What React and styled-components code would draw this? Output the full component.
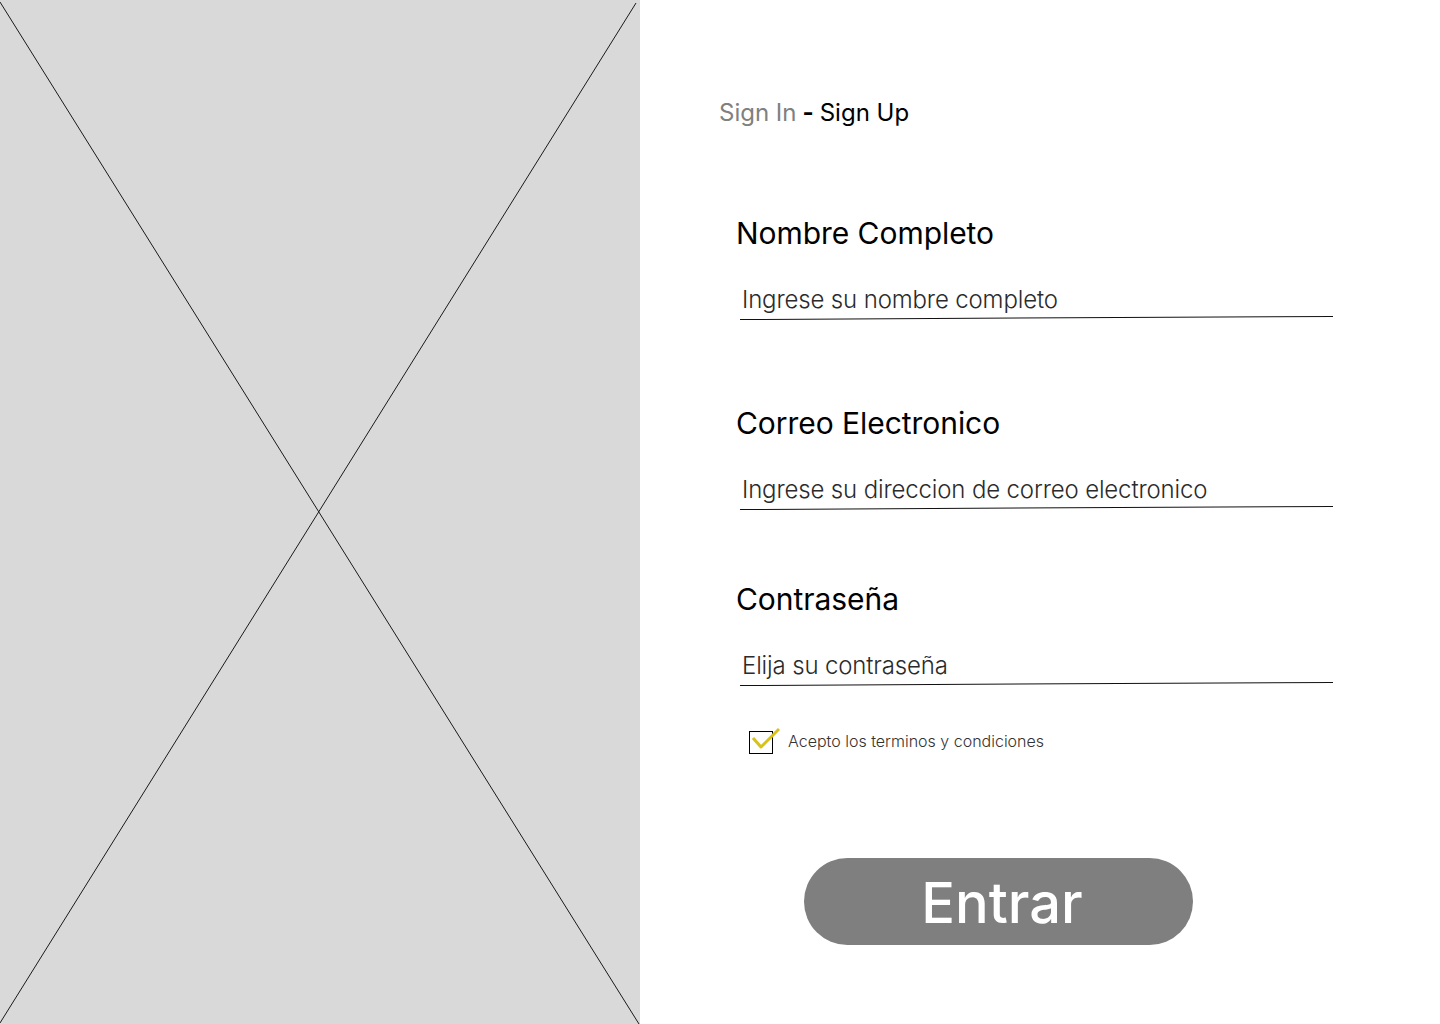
import React from 'react';
import styled, { createGlobalStyle } from 'styled-components';

const GlobalStyle = createGlobalStyle`
  html, body {
    margin: 0;
    padding: 0;
    background: #ffffff;
  }
  body {
    font-family: Inter, "Noto Sans", sans-serif;
  }
`;

const Page = styled.div`
  display: grid;
  grid-template-columns: 640px 1fr;
  width: 1440px;
  height: 1024px;
  overflow: hidden;
`;

const ImagePanel = styled.div`
  background: #d9d9d9;
  height: 1024px;
`;

const Placeholder = styled.svg`
  display: block;
  width: 640px;
  height: 1024px;
`;

const FormSide = styled.div`
  display: flex;
  flex-direction: column;
  padding-top: 98px;
`;

const Tabs = styled.div`
  margin-left: 79px;
  font-size: 24px;
  line-height: 30px;
  color: #000;
`;

const Tab = styled.span`
  color: ${props => (props.$active ? '#000000' : '#808080')};
`;

const Dash = styled.span`
  font-weight: 700;
  margin: 0 6px;
`;

const Fields = styled.div`
  display: flex;
  flex-direction: column;
  margin-left: 96px;
  width: 597px;
`;

const Field = styled.div`
  display: flex;
  flex-direction: column;
  margin-top: ${props => props.$top}px;
`;

const Label = styled.label`
  font-size: 30px;
  line-height: 34px;
  letter-spacing: -0.05px;
  color: #000;
`;

const InputWrap = styled.div`
  margin-top: 35px;
  margin-left: 4px;
`;

const Input = styled.input`
  display: block;
  width: 100%;
  box-sizing: border-box;
  border: none;
  outline: none;
  padding: 0 0 0 2px;
  font-family: Inter, "Noto Sans", sans-serif;
  font-weight: 300;
  font-size: 24px;
  letter-spacing: -0.15px;
  line-height: 30px;
  height: 30px;
  background: transparent;
  color: #222;

  &::placeholder {
    color: #2b2b2b;
    opacity: 1;
  }
`;

const Underline = styled.div`
  margin-top: 4px;
  height: 1px;
  width: 593px;
  background: #111;
  transform: rotate(-0.29deg);
  transform-origin: left center;
`;

const Terms = styled.div`
  display: flex;
  align-items: center;
  gap: 15px;
  margin-top: 45px;
  margin-left: 13px;
`;

const Box = styled.div`
  position: relative;
  width: 24px;
  height: 23px;
  box-sizing: border-box;
  border: 1px solid #000;
`;

const Check = styled.svg`
  position: absolute;
  left: 1px;
  top: -3px;
  overflow: visible;
`;

const TermsText = styled.span`
  font-size: 16px;
  font-weight: 300;
  line-height: 18px;
  margin-top: -4px;
  color: #333;
`;

const Submit = styled.button`
  display: flex;
  align-items: center;
  justify-content: center;
  box-sizing: border-box;
  margin-top: 104px;
  margin-left: 164px;
  width: 389px;
  height: 87px;
  padding: 3px 0 0 7px;
  border: none;
  border-radius: 44px;
  background: #7f7f7f;
  color: #ffffff;
  font-family: Inter, "Noto Sans", sans-serif;
  font-size: 56px;
  font-weight: 500;
  line-height: 1;
  cursor: pointer;
`;

const fields = [
  { label: 'Nombre Completo', placeholder: 'Ingrese su nombre completo', top: 88, type: 'text' },
  { label: 'Correo Electronico', placeholder: 'Ingrese su direccion de correo electronico', top: 86, type: 'email' },
  { label: 'Contraseña', placeholder: 'Elija su contraseña', top: 72, type: 'password' },
];

const App = () => (
  <>
    <GlobalStyle />
    <Page>
      <ImagePanel>
        <Placeholder viewBox="0 0 640 1024">
          <line x1="0" y1="2" x2="639" y2="1024" stroke="#1a1a1a" strokeWidth="1" />
          <line x1="636" y1="3" x2="0" y2="1023" stroke="#1a1a1a" strokeWidth="1" />
        </Placeholder>
      </ImagePanel>
      <FormSide>
        <Tabs>
          <Tab>Sign In</Tab>
          <Dash>-</Dash>
          <Tab $active>Sign Up</Tab>
        </Tabs>
        <Fields>
          {fields.map(f => (
            <Field key={f.label} $top={f.top}>
              <Label>{f.label}</Label>
              <InputWrap>
                <Input type={f.type} placeholder={f.placeholder} />
                <Underline />
              </InputWrap>
            </Field>
          ))}
          <Terms>
            <Box>
              <Check width="28" height="24" viewBox="0 0 28 24">
                <path d="M2 9 L10 18 L28 0" fill="none" stroke="#d6c21a" strokeWidth="3" strokeLinejoin="round" />
              </Check>
            </Box>
            <TermsText>Acepto los terminos y condiciones</TermsText>
          </Terms>
        </Fields>
        <Submit>Entrar</Submit>
      </FormSide>
    </Page>
  </>
);

export default App;
